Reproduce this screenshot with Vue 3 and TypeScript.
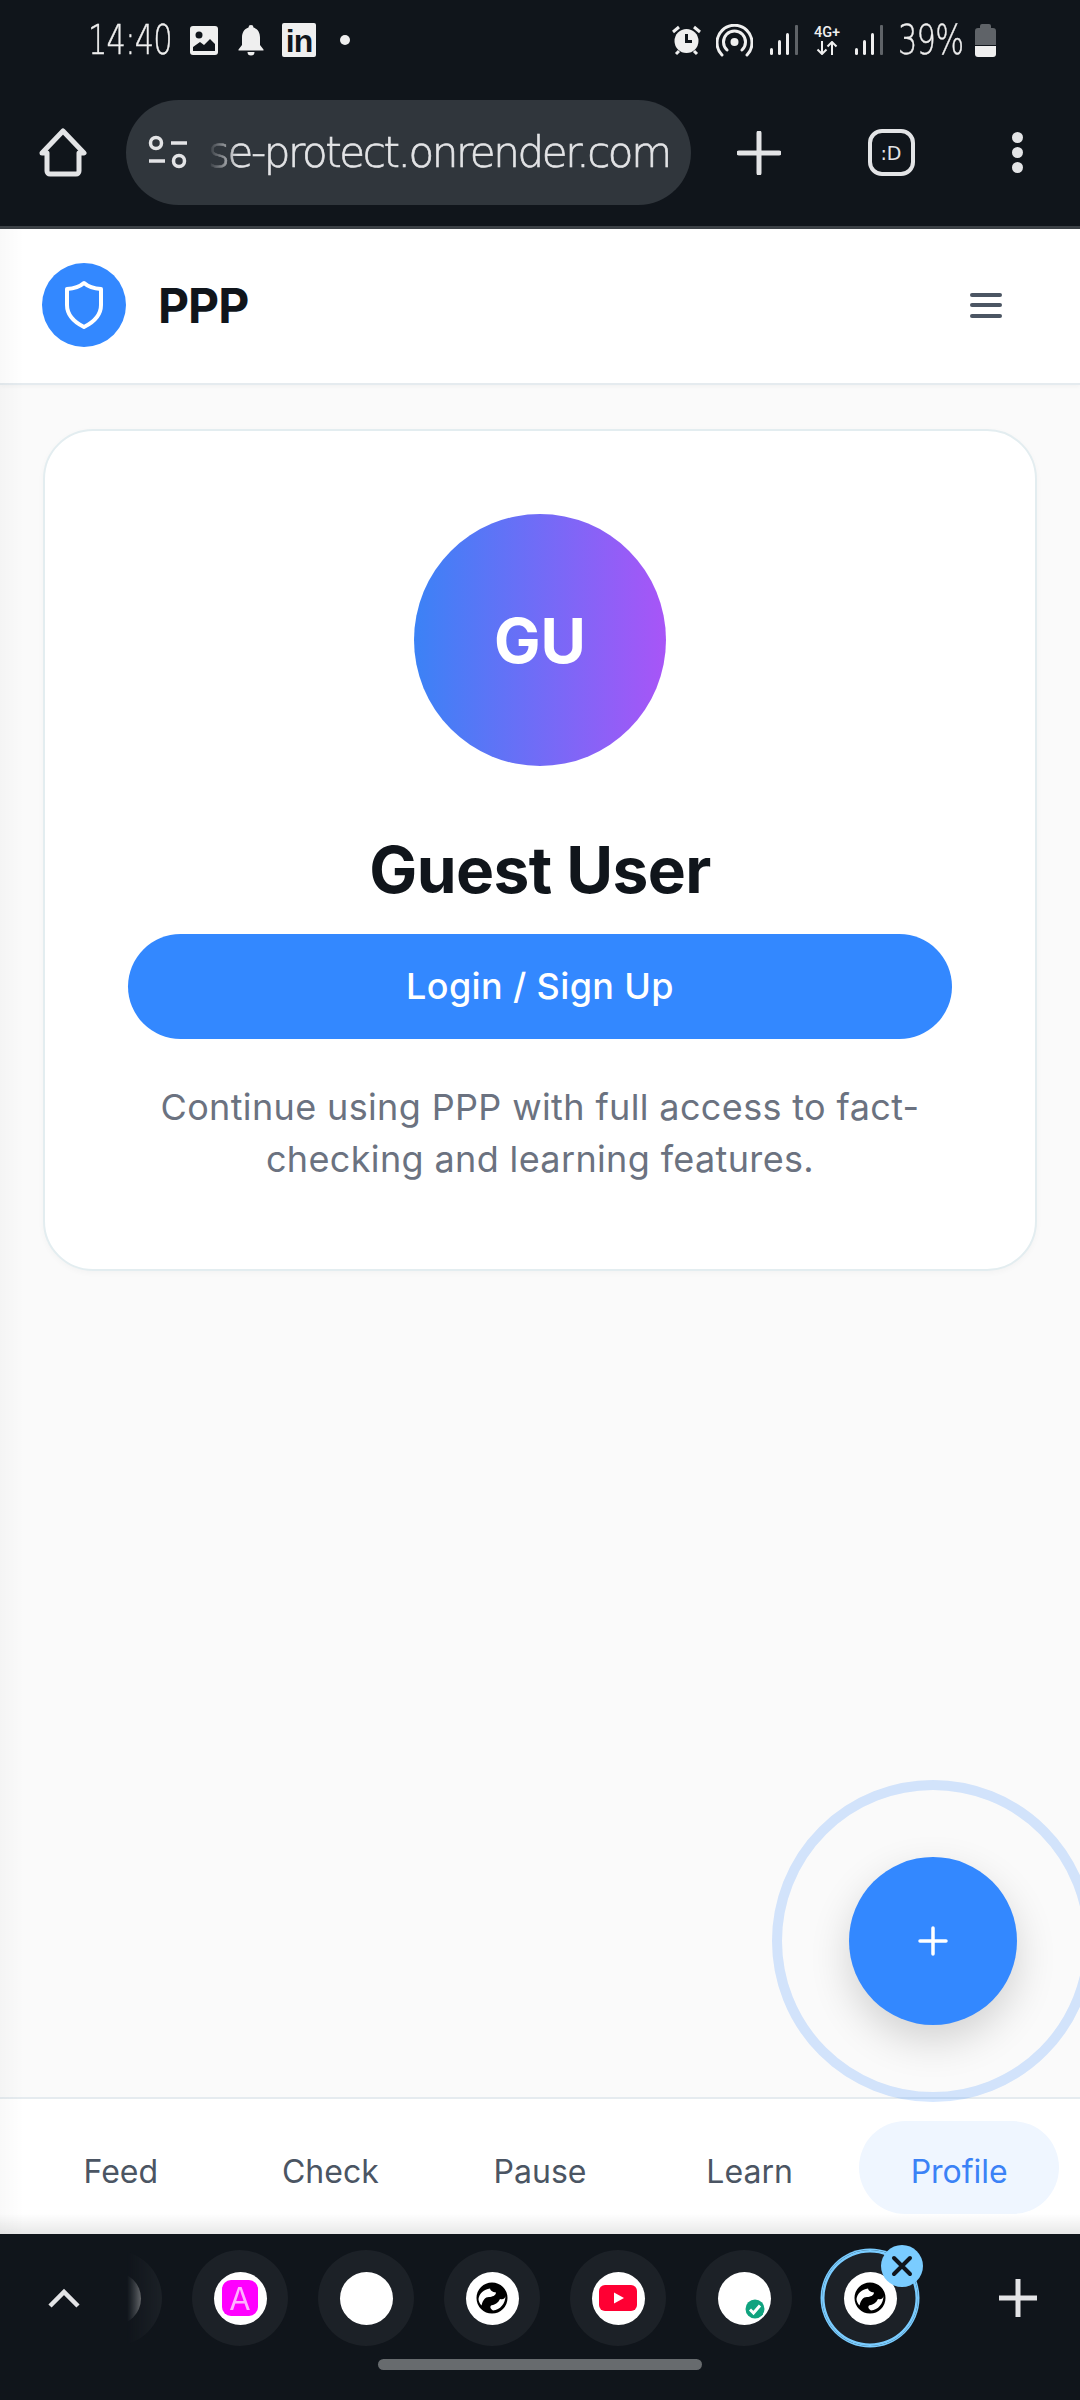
<script setup lang="ts">
interface Tab {
  label: string;
  active?: boolean;
}

const navTabs: Tab[] = [
  { label: "Feed" },
  { label: "Check" },
  { label: "Pause" },
  { label: "Learn" },
  { label: "Profile", active: true },
];

const globeDisc = "M16 .5a15.500 15.500 0 1 0 0 31 15.500 15.500 0 0 0 0-31Z";
const globeSwirl =
  "M2.500 17C3 12 8 7 14 6.500c.5 2 2 3.500 6 4 0 3-4 4.500-7 4.500-4 0-6 3-7.500 8.500-1.800-2-3-4.500-3-6.500ZM29.500 13.500c0 3-2.500 4.500-5.500 3.500-2 4-5 6-9 6.500-1.500 1.500-.5 3.500 2 5 7-.5 12.500-7 12.500-15Z";
</script>

<template>
  <div class="phone">
    <header class="chrome">
      <div class="status">
        <span class="clock">14:40</span>
        <svg class="ic-image" width="28" height="29" viewBox="0 0 28 29">
          <rect width="28" height="29" rx="3" fill="#efefef" />
          <circle cx="9" cy="9" r="3.500" fill="#10151b" />
          <path d="M3 25v-4l7-5 4 3 6-6 5 5v7Z" fill="#10151b" />
        </svg>
        <svg class="ic-bell" width="26" height="31" viewBox="0 0 26 31">
          <path
            d="M13 0a2.500 2.500 0 0 1 2.500 2.600C20 4 22 8 22 12.500V20l3.500 4.500v1H.5v-1L4 20v-7.500C4 8 6 4 10.500 2.600A2.500 2.500 0 0 1 13 0Z"
            fill="#efefef"
          />
          <path d="M9.500 27h7a3.500 3.500 0 0 1-7 0Z" fill="#efefef" />
        </svg>
        <span class="ic-linkedin">in</span>
        <span class="ic-dot"></span>

        <span class="status-spacer"></span>

        <svg class="ic-alarm" width="29" height="31" viewBox="0 0 29 31">
          <circle cx="14.500" cy="16" r="12" fill="#efefef" />
          <path d="M14.500 9v7.500h5.500" fill="none" stroke="#10151b" stroke-width="3" />
          <path d="M1 7l6-5M28 7l-6-5M4 29l3-3M25 29l-3-3" stroke="#efefef" stroke-width="3" />
        </svg>
        <svg class="ic-hotspot" width="37" height="33" viewBox="0 0 37 33">
          <circle cx="18.500" cy="18" r="4" fill="#efefef" />
          <path
            d="M11 26a11 11 0 1 1 15 0M6 31a17.500 17.500 0 1 1 25 0"
            fill="none"
            stroke="#efefef"
            stroke-width="3"
            stroke-linecap="round"
          />
        </svg>
        <svg class="ic-signal" width="28" height="30" viewBox="0 0 28 30">
          <rect x="0" y="23" width="3" height="7" rx="1.500" fill="#efefef" />
          <rect x="8" y="15" width="3" height="15" rx="1.500" fill="#efefef" />
          <rect x="16" y="8" width="3" height="22" rx="1.500" fill="#efefef" />
          <rect x="25" y="0" width="3" height="30" rx="1" fill="#5f6368" />
        </svg>
        <span class="net">
          <span class="net-label">4G+</span>
          <svg width="22" height="14" viewBox="0 0 22 14">
            <path
              d="M6 0v13M1.500 8.500 6 13l4.500-4.500M16 14V1M11.500 5.500 16 1l4.500 4.500"
              fill="none"
              stroke="#efefef"
              stroke-width="2"
            />
          </svg>
        </span>
        <svg class="ic-signal2" width="28" height="30" viewBox="0 0 28 30">
          <rect x="0" y="23" width="3" height="7" rx="1.500" fill="#efefef" />
          <rect x="8" y="15" width="3" height="15" rx="1.500" fill="#efefef" />
          <rect x="16" y="8" width="3" height="22" rx="1.500" fill="#efefef" />
          <rect x="25" y="0" width="3" height="30" rx="1" fill="#5f6368" />
        </svg>
        <span class="battery-text">39%</span>
        <svg class="ic-battery" width="21" height="33" viewBox="0 0 21 33">
          <path d="M7 0h7a2 2 0 0 1 2 2v2h2a3 3 0 0 1 3 3v14H0V7a3 3 0 0 1 3-3h2V2a2 2 0 0 1 2-2Z" fill="#5f6368" />
          <path d="M0 22h21v8a3 3 0 0 1-3 3H3a3 3 0 0 1-3-3Z" fill="#efefef" />
        </svg>
      </div>

      <div class="toolbar">
        <div class="tool tool-home">
          <svg width="48" height="50" viewBox="0 0 48 50">
            <path
              d="M3 25 24 3l21 22h-5v18a3 3 0 0 1-3 3H11a3 3 0 0 1-3-3V25Z"
              fill="none"
              stroke="#e3e4e6"
              stroke-width="5"
              stroke-linejoin="round"
            />
          </svg>
        </div>
        <div class="url-pill">
          <svg class="tune" width="40" height="36" viewBox="0 0 40 36">
            <circle cx="8" cy="8" r="5.500" fill="none" stroke="#e3e4e6" stroke-width="3.500" />
            <path d="M23 8h16M1 26h16" stroke="#e3e4e6" stroke-width="3.500" />
            <circle cx="31" cy="26" r="5.500" fill="none" stroke="#e3e4e6" stroke-width="3.500" />
          </svg>
          <span class="url-clip">
            <span class="url-text">se-protect.onrender.com</span>
          </span>
        </div>
        <div class="tool tool-plus">
          <svg width="44" height="44" viewBox="0 0 44 44">
            <path d="M22 2v40M2 22h40" stroke="#e3e4e6" stroke-width="5" stroke-linecap="round" />
          </svg>
        </div>
        <div class="tool tool-tabs"><span class="tab-count">:D</span></div>
        <div class="tool tool-more">
          <span class="more-dot"></span>
          <span class="more-dot"></span>
          <span class="more-dot"></span>
        </div>
      </div>
    </header>

    <div class="app">
      <div class="app-head">
        <div class="logo">
          <svg width="42" height="50" viewBox="0 0 42 50">
            <path
              d="M21 3c4 3.500 10 5.500 17 6v16c0 10-7 17-17 22C11 42 4 35 4 25V9c7-.5 13-2.500 17-6Z"
              fill="none"
              stroke="#fff"
              stroke-width="4"
              stroke-linejoin="round"
            />
          </svg>
        </div>
        <span class="brand">PPP</span>
        <div class="burger">
          <span></span>
          <span></span>
          <span></span>
        </div>
      </div>

      <main class="content">
        <section class="card">
          <div class="avatar">GU</div>
          <h1 class="name">Guest User</h1>
          <button class="login">Login / Sign Up</button>
          <p class="blurb">Continue using PPP with full access to fact-checking and learning features.</p>
        </section>
      </main>

      <nav class="nav">
        <div v-for="tab in navTabs" :key="tab.label" class="nav-tab" :class="{ active: tab.active }">
          {{ tab.label }}
        </div>
      </nav>

      <div class="edge-left"></div>
      <div class="edge-bottom"></div>
    </div>

    <div class="strip">
      <div class="strip-row">
        <div class="strip-chevron">
          <svg width="32" height="20" viewBox="0 0 32 20">
            <path d="M2 18 16 4l14 14" fill="none" stroke="#e3e4e6" stroke-width="4.500" />
          </svg>
        </div>
        <div class="strip-tabs">
          <div class="chip">
            <div class="fav fav-dark"></div>
          </div>
          <div class="chip">
            <div class="fav">
              <span class="tile">A</span>
            </div>
          </div>
          <div class="chip">
            <div class="fav"></div>
          </div>
          <div class="chip">
            <div class="fav">
              <svg width="32" height="32" viewBox="0 0 32 32">
                <path :d="globeDisc" fill="#000" />
                <path :d="globeSwirl" fill="#fff" />
              </svg>
            </div>
          </div>
          <div class="chip">
            <div class="fav">
              <svg width="38" height="26" viewBox="0 0 38 26">
                <rect width="38" height="26" rx="6" fill="#ff0033" />
                <path d="M15 7.500 25 13l-10 5.500Z" fill="#fff" />
              </svg>
            </div>
          </div>
          <div class="chip">
            <div class="fav">
              <svg class="fav-check" width="20" height="20" viewBox="0 0 20 20">
                <circle cx="10" cy="10" r="9.500" fill="#10a37f" />
                <path d="M5 10.500 8.500 14 15 6.500" fill="none" stroke="#fff" stroke-width="3" />
              </svg>
            </div>
          </div>
          <div class="chip chip-active">
            <div class="fav">
              <svg width="32" height="32" viewBox="0 0 32 32">
                <path :d="globeDisc" fill="#000" />
                <path :d="globeSwirl" fill="#fff" />
              </svg>
            </div>
            <div class="chip-close">
              <svg width="24" height="24" viewBox="0 0 24 24">
                <path d="M4 4l16 16M20 4 4 20" stroke="#10151b" stroke-width="4" stroke-linecap="round" />
              </svg>
            </div>
          </div>
        </div>
        <div class="strip-plus">
          <svg width="38" height="38" viewBox="0 0 38 38">
            <path d="M19 0v38M0 19h38" stroke="#e3e4e6" stroke-width="5" />
          </svg>
        </div>
      </div>
      <div class="home-bar"></div>
    </div>

    <div class="fab-ring"></div>
    <button class="fab" aria-label="Add">
      <svg width="30" height="30" viewBox="0 0 30 30">
        <path d="M15 2v26M2 15h26" stroke="#fff" stroke-width="3.500" stroke-linecap="round" />
      </svg>
    </button>
  </div>
</template>

<style>
html,
body {
  margin: 0;
  background: #10151b;
}
</style>

<style scoped>
.phone {
  position: relative;
  display: flex;
  flex-direction: column;
  width: 1080px;
  height: 2400px;
  overflow: hidden;
  font-family: Inter, "Liberation Sans", sans-serif;
  background: #fafafa;
}

/* browser chrome */
.chrome {
  background: #10151b;
  border-bottom: 3px solid #3c4146;
}
.status {
  display: flex;
  align-items: center;
  height: 80px;
  padding: 0 84px 0 88px;
  color: #efefef;
}
.clock,
.battery-text {
  flex: none;
  font-family: "DejaVu Sans", sans-serif;
  font-size: 40px;
  font-weight: 200;
  letter-spacing: -1px;
  white-space: nowrap;
  transform: scaleX(0.76);
  transform-origin: left center;
  -webkit-text-stroke: 0.4px #efefef;
}
.clock {
  width: 84px;
  margin-right: 18px;
}
.ic-bell {
  margin-left: 20px;
}
.ic-linkedin {
  display: flex;
  align-items: flex-end;
  justify-content: center;
  width: 34px;
  height: 34px;
  margin-left: 18px;
  border-radius: 2px;
  background: #efefef;
  color: #10151b;
  font-family: "Liberation Sans", sans-serif;
  font-size: 32px;
  font-weight: 700;
  line-height: 32px;
  letter-spacing: -1px;
}
.ic-dot {
  width: 10px;
  height: 10px;
  margin-left: 24px;
  border-radius: 50%;
  background: #efefef;
}
.status-spacer {
  flex: 1;
}
.ic-hotspot {
  margin-left: 15px;
}
.ic-signal {
  margin-left: 17px;
}
.net {
  display: flex;
  flex-direction: column;
  align-items: center;
  width: 32px;
  margin-left: 13px;
}
.net-label {
  font-family: Roboto, sans-serif;
  font-size: 14.500px;
  font-weight: 500;
  line-height: 16px;
}
.ic-signal2 {
  margin-left: 12px;
}
.battery-text {
  width: 68px;
  margin-left: 15px;
}
.ic-battery {
  margin-left: 9px;
}
.toolbar {
  display: flex;
  align-items: center;
  height: 105px;
  padding: 20px 0 21px;
}
.tool {
  display: flex;
  align-items: center;
  justify-content: center;
  height: 105px;
}
.tool-home {
  width: 126px;
}
.url-pill {
  display: flex;
  align-items: center;
  width: 565px;
  height: 105px;
  padding: 0 20px 0 22px;
  box-sizing: border-box;
  border-radius: 53px;
  background: #30363c;
}
.tune {
  flex: none;
}
.url-clip {
  flex: 1;
  margin-left: 20px;
  overflow: hidden;
  -webkit-mask-image: linear-gradient(to right, transparent 0, #000 30px);
  mask-image: linear-gradient(to right, transparent 0, #000 30px);
}
.url-text {
  display: block;
  color: #e3e4e6;
  font-family: "DejaVu Sans", sans-serif;
  font-size: 42px;
  font-weight: 200;
  letter-spacing: -2.400px;
  white-space: nowrap;
  -webkit-text-stroke: 0.6px #e3e4e6;
}
.tool-plus {
  width: 136px;
}
.tool-tabs {
  width: 128px;
}
.tab-count {
  display: flex;
  align-items: center;
  justify-content: center;
  width: 47px;
  height: 47px;
  box-sizing: border-box;
  border: 4.500px solid #e3e4e6;
  border-radius: 14px;
  color: #e3e4e6;
  font-family: "DejaVu Sans", sans-serif;
  font-size: 19px;
}
.tool-more {
  flex-direction: column;
  gap: 4px;
  width: 125px;
}
.more-dot {
  width: 11px;
  height: 11px;
  border-radius: 50%;
  background: #e3e4e6;
}

/* page */
.app {
  position: relative;
  flex: 1;
  display: flex;
  flex-direction: column;
  min-height: 0;
}
.app-head {
  display: flex;
  align-items: center;
  flex: none;
  height: 156px;
  padding: 0 78px 2px 42px;
  box-sizing: border-box;
  background: #fff;
  border-bottom: 2px solid #e5ebef;
  box-shadow: 0 2px 4px rgb(0 0 0 / 0.03);
}
.logo {
  display: flex;
  align-items: center;
  justify-content: center;
  width: 84px;
  height: 84px;
  border-radius: 50%;
  background: #3388ff;
}
.brand {
  flex: 1;
  margin-left: 32px;
  color: #10151b;
  font-size: 48px;
  font-weight: 700;
  letter-spacing: -1px;
}
.burger {
  display: flex;
  flex-direction: column;
  gap: 6.500px;
}
.burger span {
  width: 32px;
  height: 4px;
  border-radius: 2px;
  background: #4b5563;
}
.content {
  flex: 1;
  padding: 44px 43px 0;
}
.card {
  display: flex;
  flex-direction: column;
  align-items: center;
  box-sizing: border-box;
  height: 842px;
  padding: 83px 83px 0;
  background: #fff;
  border: 2px solid #e3edf0;
  border-radius: 50px;
  box-shadow: 0 2px 6px rgb(0 0 0 / 0.03);
}
.avatar {
  display: flex;
  align-items: center;
  justify-content: center;
  flex: none;
  width: 252px;
  height: 252px;
  border-radius: 50%;
  background: linear-gradient(90deg, #3b82f6, #a855f7);
  color: #fff;
  font-size: 62px;
  font-weight: 700;
}
.name {
  margin: 66px 0 0;
  color: #10151b;
  font-size: 64px;
  font-weight: 700;
  line-height: 76px;
  letter-spacing: -0.600px;
}
.login {
  width: 100%;
  height: 105px;
  margin-top: 26px;
  border: 0;
  border-radius: 53px;
  background: #3388ff;
  color: #fff;
  font-family: inherit;
  font-size: 36px;
  font-weight: 500;
  letter-spacing: 0.360px;
  padding-bottom: 3px;
}
.blurb {
  margin: 42px 0 0;
  color: #6b7280;
  font-size: 36px;
  line-height: 52px;
  letter-spacing: 0.360px;
  text-align: center;
}
.nav {
  display: grid;
  grid-template-columns: repeat(5, 1fr);
  gap: 10px;
  flex: none;
  height: 137px;
  padding: 22px 21px 20px;
  box-sizing: border-box;
  background: #fff;
  border-top: 2px solid #e5ebef;
}
.nav-tab {
  display: flex;
  align-items: center;
  justify-content: center;
  padding-top: 8px;
  border-radius: 48px;
  color: #4b5563;
  font-size: 32px;
}
.nav-tab.active {
  background: #eff6ff;
  color: #3b82f6;
}
.edge-left {
  position: absolute;
  top: 0;
  bottom: 0;
  left: 0;
  width: 24px;
  background: linear-gradient(to right, rgb(0 0 0 / 0.025), transparent);
  pointer-events: none;
}
.edge-bottom {
  position: absolute;
  left: 0;
  right: 0;
  bottom: 0;
  height: 20px;
  background: linear-gradient(to bottom, transparent, rgb(0 0 0 / 0.09));
  pointer-events: none;
}

/* tab strip */
.strip {
  flex: none;
  height: 166px;
  box-sizing: border-box;
  padding-top: 14px;
  background: #10151b;
}
.strip-row {
  display: flex;
  align-items: center;
  height: 100px;
}
.strip-chevron {
  display: flex;
  justify-content: center;
  flex: none;
  width: 127px;
}
.strip-tabs {
  display: flex;
  align-items: center;
  flex: none;
  gap: 30px;
  width: 828px;
  height: 130px;
  overflow: hidden;
  box-sizing: border-box;
  -webkit-mask-image: linear-gradient(to right, transparent 0, #000 36px);
  mask-image: linear-gradient(to right, transparent 0, #000 36px);
}
.chip {
  position: relative;
  display: flex;
  align-items: center;
  justify-content: center;
  flex: none;
  width: 96px;
  height: 96px;
  border-radius: 50%;
  background: #1c2127;
}
.chip:first-child {
  margin-left: -61px;
}
.chip-active {
  box-shadow:
    inset 0 0 0 2.500px #7accff,
    0 0 0 1.500px #7accff;
}
.chip-close {
  position: absolute;
  top: -5px;
  right: -5px;
  display: flex;
  align-items: center;
  justify-content: center;
  width: 42px;
  height: 42px;
  border-radius: 50%;
  background: #7accff;
}
.fav {
  position: relative;
  display: flex;
  align-items: center;
  justify-content: center;
  width: 53px;
  height: 53px;
  border-radius: 50%;
  background: #fff;
}
.fav-dark {
  background: linear-gradient(to right, #15354a 40%, #ddd 95%);
}
.fav-check {
  position: absolute;
  right: 6px;
  bottom: 6px;
}
.tile {
  display: flex;
  align-items: center;
  justify-content: center;
  width: 36px;
  height: 36px;
  border-radius: 9px;
  background: #ff00ff;
  color: #ffb3ff;
  font-family: Inter, sans-serif;
  font-size: 31px;
  font-weight: 400;
}
.strip-plus {
  display: flex;
  justify-content: center;
  flex: 1;
}
.home-bar {
  width: 324px;
  height: 11px;
  margin: 11px auto 0;
  border-radius: 6px;
  background: #676b6e;
}

/* floating add button */
.fab-ring {
  position: absolute;
  left: 772px;
  top: 1780px;
  width: 322px;
  height: 322px;
  box-sizing: border-box;
  border: 10px solid rgb(51 136 255 / 0.2);
  border-radius: 50%;
  pointer-events: none;
}
.fab {
  position: absolute;
  left: 849px;
  top: 1857px;
  display: flex;
  align-items: center;
  justify-content: center;
  width: 168px;
  height: 168px;
  padding: 0;
  border: 0;
  border-radius: 50%;
  background: #3388ff;
  box-shadow: 0 16px 40px rgb(0 0 0 / 0.16);
}
</style>
